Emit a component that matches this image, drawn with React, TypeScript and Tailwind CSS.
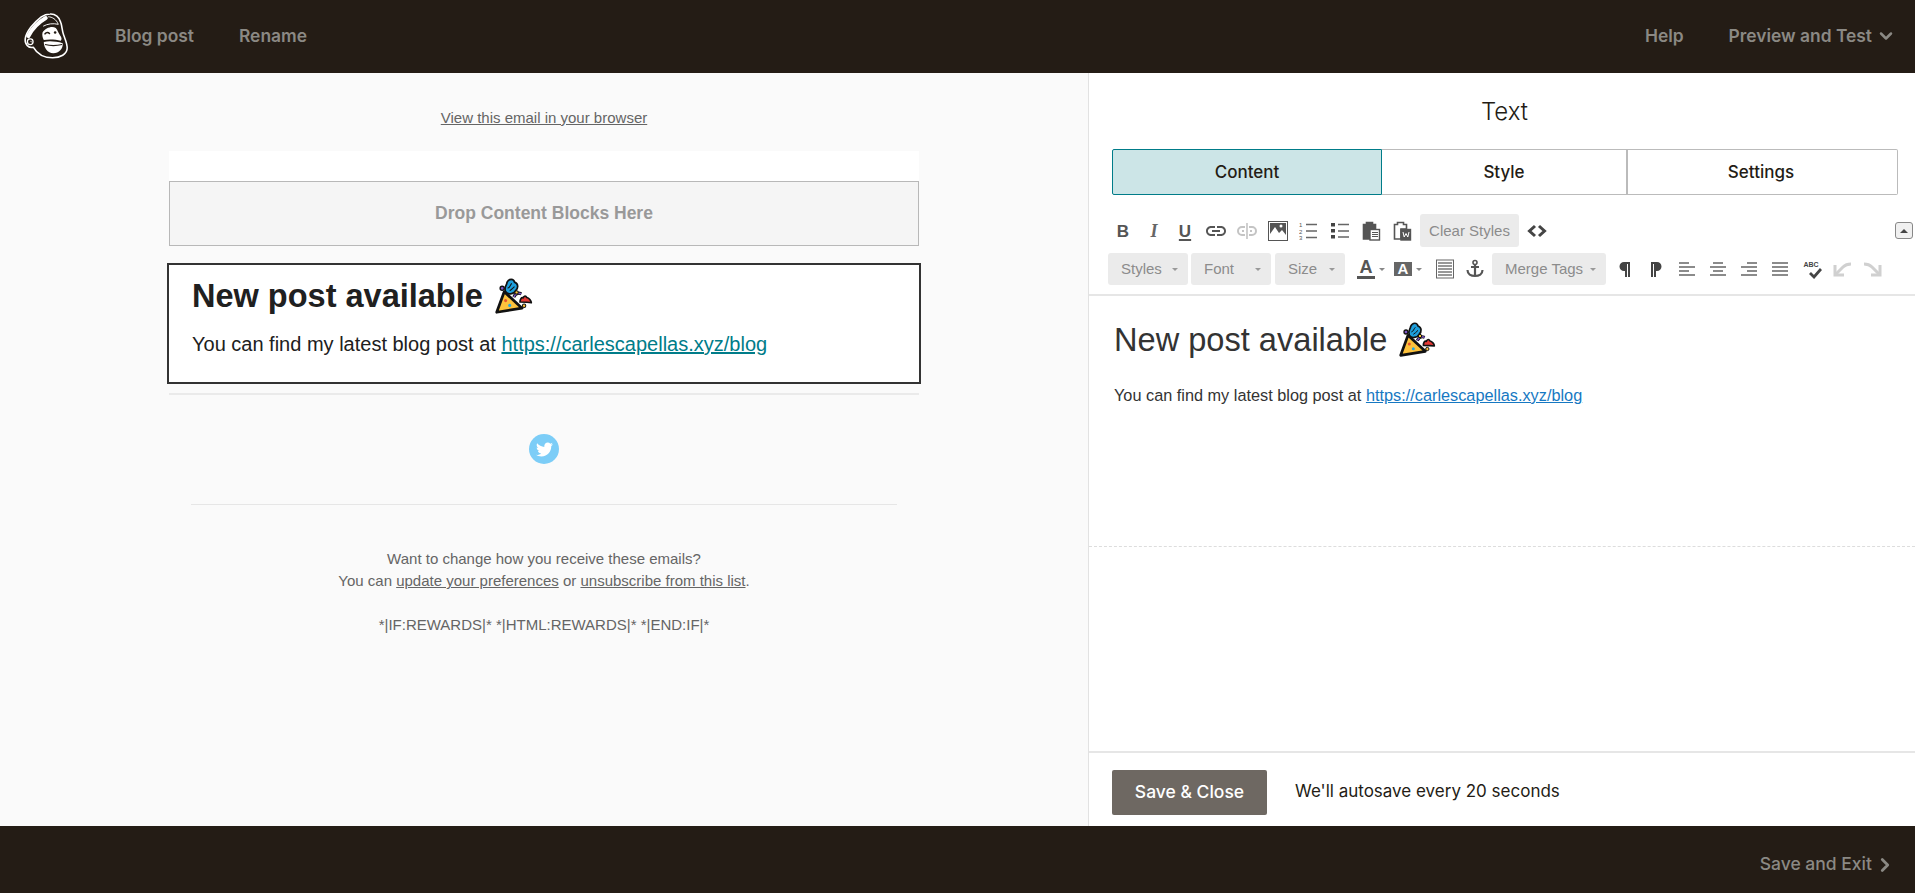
import React from "react";
import { ChevronDown, ChevronRight } from "lucide-react";
import { FaTwitter } from "react-icons/fa";
import { MdLink } from "react-icons/md";

function Popper({ w, h }: { w: number; h: number }) {
  return (
    <svg width={w} height={h} viewBox="15 20 115 108" className="inline-block shrink-0">
      <circle cx="38" cy="50" r="6" fill="#7d55c7" stroke="#111" strokeWidth="4" />
      <path d="M48 60 C42 45 52 42 52 33 C58 20 72 22 74 32 C86 36 85 50 78 56 C72 68 54 70 48 60Z" fill="#1e9fdc" stroke="#111" strokeWidth="5" />
      <path d="M54 50 C62 47 60 42 66 36 M60 57 C66 54 68 50 74 45" fill="none" stroke="#111" strokeWidth="3" />
      <path d="M72 76 C76 66 84 62 94 66" fill="none" stroke="#111" strokeWidth="9" />
      <path d="M72 76 C76 66 84 62 94 66" fill="none" stroke="#7d55c7" strokeWidth="4" />
      <path d="M90 90 C90 82 94 76 99 78 C102 71 107 71 110 77 C116 78 123 86 123 92 C113 90 100 90 90 90Z" fill="#e53935" stroke="#111" strokeWidth="5" strokeLinejoin="round" />
      <path d="M22 120 L44 60 L96 108 Z" fill="#fdc23c" stroke="#111" strokeWidth="8" strokeLinejoin="round" />
      <circle cx="48" cy="86" r="4.500" fill="#e5532d" />
      <circle cx="60" cy="100" r="4.500" fill="#2aa7e0" />
      <circle cx="80" cy="62" r="5" fill="#fdc23c" stroke="#111" strokeWidth="3" />
      <circle cx="102" cy="101" r="5" fill="#fdc23c" stroke="#111" strokeWidth="3" />
    </svg>
  );
}

function Logo() {
  return (
    <svg width="46" height="48" viewBox="26 20 146 150" className="shrink-0">
      <path d="M112 25 C128 24 142 36 146 52 C150 64 150 78 155 92 C160 106 168 122 166 136 C164 152 146 164 120 164 C92 164 70 150 59 131 C44 134 31 122 33 104 C36 82 60 52 84 34 C93 28 103 25 112 25Z" fill="#241c15" stroke="#fff" strokeWidth="5" strokeLinejoin="round" />
      <path d="M43 95 C54 74 74 52 98 38" fill="none" stroke="#fff" strokeWidth="13" strokeLinecap="round" />
      <path d="M106 34 C118 34 132 42 138 58 C122 54 104 56 90 64" fill="none" stroke="#fff" strokeWidth="3" />
      <circle cx="49" cy="113" r="9" fill="none" stroke="#fff" strokeWidth="4" />
      <path d="M49 113 C52 109 56 112 54 116" fill="none" stroke="#fff" strokeWidth="2" />
      <path d="M88 84 C97 70 118 62 130 70 C136 76 137 84 143 92 C149 100 150 106 146 110 C130 106 108 104 92 108 C88 100 86 92 88 84Z" fill="#fff" />
      <path d="M96 88 C100 83 106 83 110 87" fill="none" stroke="#241c15" strokeWidth="5" strokeLinecap="round" />
      <circle cx="128" cy="84" r="4" fill="#241c15" />
      <path d="M92 114 C108 110 132 112 152 118 C154 134 140 150 122 150 C104 150 92 132 92 114Z" fill="#fff" />
      <path d="M96 122 C112 126 132 126 150 122" fill="none" stroke="#241c15" strokeWidth="4" />
    </svg>
  );
}

const Ic = ({ children, w = 20 }: { children: React.ReactNode; w?: number }) => (
  <svg width={w} height="20" viewBox="0 0 20 20" className="shrink-0" fill="#555">{children}</svg>
);

function ImageIcon() {
  return (
    <Ic>
      <rect x="0.5" y="0.5" width="19" height="19" fill="#fff" stroke="#555" />
      <path d="M2 2h16v12l-4-5-3 3-4-6-5 7z" fill="#555" />
      <circle cx="13" cy="5" r="1.5" fill="#fff" />
    </Ic>
  );
}
function OrderedList() {
  return (
    <Ic>
      <text x="0" y="6" fontSize="6" fontFamily="Liberation Sans" fill="#555">1</text>
      <text x="0" y="12.500" fontSize="6" fontFamily="Liberation Sans" fill="#555">2</text>
      <text x="0" y="19" fontSize="6" fontFamily="Liberation Sans" fill="#555">3</text>
      <path d="M7 3.500h11M7 10h11M7 16.500h11" stroke="#666" strokeWidth="1.300" />
    </Ic>
  );
}
function BulletList() {
  return (
    <Ic>
      <rect x="1" y="2" width="4" height="3.500" fill="#444" />
      <rect x="1" y="8" width="4" height="3.500" fill="#444" />
      <rect x="1" y="14" width="4" height="3.500" fill="#444" />
      <path d="M8 3.500h11M8 10h11M8 16h11" stroke="#666" strokeWidth="1.300" />
    </Ic>
  );
}
function Clipboard({ word }: { word?: boolean }) {
  return (
    <Ic>
      <path d="M2.500 3.500h3V1.500h6v2h3V8H9v10H2.500z" fill={word ? "#fff" : "#555"} stroke="#555" strokeWidth="1.600" />
      <rect x="9" y="8.500" width="9.500" height="10.500" fill={word ? "#555" : "#fff"} stroke="#555" strokeWidth="1.400" />
      {word ? (
        <path d="M11 11l1.200 5 1.800-3.500 1.800 3.500 1.200-5" fill="none" stroke="#fff" strokeWidth="1" />
      ) : (
        <path d="M11 11.500h6M11 13.500h6M11 15.500h6" stroke="#555" strokeWidth="1" />
      )}
    </Ic>
  );
}
function Unlink() {
  return (
    <Ic>
      <path d="M8 6H5a4 4 0 0 0 0 8h3M12 6h3a4 4 0 0 1 0 8h-3M5 10h2M13 10h2" fill="none" stroke="#c4c4c4" strokeWidth="2" />
      <path d="M10 2v16" stroke="#c4c4c4" strokeWidth="1.600" />
    </Ic>
  );
}
function Align({ kind }: { kind: "l" | "c" | "r" | "j" }) {
  const d = {
    l: "M2 4h10M2 8h16M2 12h10M2 16h16",
    c: "M5 4h10M2 8h16M5 12h10M2 16h16",
    r: "M8 4h10M2 8h16M8 12h10M2 16h16",
    j: "M2 4h16M2 8h16M2 12h16M2 16h16",
  }[kind];
  return <Ic><path d={d} stroke="#666" strokeWidth="1.500" /></Ic>;
}
function Pilcrow({ flip }: { flip?: boolean }) {
  return (
    <Ic>
      <path
        d={flip ? "M5 3h6a4.500 4.500 0 0 1 0 9h-1v6H8V5H7v13H5z" : "M15 3H9a4.500 4.500 0 0 0 0 9h1v6h2V5h1v13h2z"}
        fill="#444"
      />
    </Ic>
  );
}
function CornerArrow({ flip }: { flip?: boolean }) {
  return (
    <svg width="20" height="20" viewBox="0 0 20 20" className={flip ? "shrink-0 -scale-x-100" : "shrink-0"}>
      <path d="M3 6v10h9" fill="none" stroke="#d0d0d0" strokeWidth="3" />
      <path d="M4 15 L11 8 C13 6 15 5 19 5" fill="none" stroke="#d0d0d0" strokeWidth="3" />
    </svg>
  );
}
function Spell() {
  return (
    <span className="relative flex h-[20px] w-[20px] items-start justify-center">
      <span className="text-[7px] font-bold leading-[12px] text-[#444]">ABC</span>
      <svg width="14" height="11" viewBox="0 0 14 11" className="absolute bottom-0 right-[-1px]"><path d="M2 5l4 4 7-8" fill="none" stroke="#444" strokeWidth="2.800" /></svg>
    </span>
  );
}
function Caret({ dark }: { dark?: boolean }) {
  return <span className={`h-0 w-0 border-x-[3.5px] border-t-[3.5px] border-x-transparent ${dark ? "border-t-[#888]" : "border-t-[#999]"}`} />;
}
function Drop({ label, cls }: { label: string; cls: string }) {
  return (
    <span className={`flex h-[32px] shrink-0 items-center justify-between rounded-[3px] bg-[#ebebeb] pl-[13px] pr-[10px] text-[15px] text-[#8c8c8c] ${cls}`}>
      {label}
      <Caret />
    </span>
  );
}

function Toolbar() {
  return (
    <div className="flex h-[101px] shrink-0 flex-col border-b-[2px] border-[#e6e6e6] pl-[20px] pr-[2px] pt-[19px] font-['Liberation_Sans',sans-serif]">
      <div className="flex h-[33px] items-center">
        <div className="mt-[1px] flex items-center gap-[11px] pl-[4px]">
          <span className="w-[20px] text-center text-[17px] font-bold leading-none text-[#555]">B</span>
          <span className="w-[20px] text-center font-['Liberation_Serif',serif] text-[18px] font-bold italic leading-none text-[#666]">I</span>
          <span className="w-[20px] text-center text-[17px] font-bold leading-none text-[#555] underline decoration-2 underline-offset-2">U</span>
          <span className="flex w-[20px] justify-center"><MdLink size={24} color="#555" className="-mx-[2px]" /></span>
          <Unlink />
          <ImageIcon />
          <OrderedList />
          <BulletList />
          <Clipboard />
          <Clipboard word />
        </div>
        <span className="ml-[8px] flex h-[33px] w-[99px] items-center justify-center rounded-[3px] bg-[#ebebeb] pt-[1px] text-[15px] text-[#8c8c8c]">Clear Styles</span>
        <svg width="20" height="14" viewBox="0 0 20 14" className="ml-[8px] mt-[1px] shrink-0">
          <path d="M8 2L2.500 7 8 12M12 2l5.500 5L12 12" fill="none" stroke="#444" strokeWidth="3" />
        </svg>
        <span className="ml-auto flex h-[17px] w-[18px] items-center justify-center rounded-[3px] border border-[#888] bg-[#f0f0f0]">
          <span className="h-0 w-0 border-x-[4px] border-b-[4px] border-x-transparent border-b-[#444]" />
        </span>
      </div>
      <div className="-ml-[1px] mt-[6px] flex h-[32px] items-center">
        <Drop label="Styles" cls="w-[80px]" />
        <Drop label="Font" cls="ml-[3px] w-[80px]" />
        <Drop label="Size" cls="ml-[4px] w-[70px]" />
        <span className="ml-[12px] flex items-center gap-[4px]">
          <span className="flex h-[20px] w-[18px] flex-col items-center border-b-[3px] border-[#555] text-[18px] font-bold leading-[17px] text-[#555]">A</span>
          <Caret dark />
        </span>
        <span className="ml-[9px] flex items-center gap-[4px]">
          <span className="flex h-[14px] w-[18px] items-end justify-center bg-[#666] text-[15px] font-bold leading-[14px] text-white">A</span>
          <Caret dark />
        </span>
        <span className="ml-[13px]">
          <Ic>
            <rect x="1.500" y="1" width="17" height="18" fill="#fff" stroke="#666" />
            <path d="M3 4h14M3 7h14M3 10h14M3 13h14M3 16h14" stroke="#777" strokeWidth="1.600" />
          </Ic>
        </span>
        <span className="ml-[10px]">
          <Ic>
            <circle cx="10" cy="3.500" r="2" fill="none" stroke="#555" strokeWidth="1.600" />
            <path d="M10 5.500V18M6 8h8M2.500 11c0 4 3.500 6 7.500 6s7.500-2 7.500-6" fill="none" stroke="#555" strokeWidth="2.200" />
          </Ic>
        </span>
        <Drop label="Merge Tags" cls="ml-[7px] w-[114px]" />
        <div className="ml-[9px] flex items-center gap-[11px]">
          <Pilcrow />
          <Pilcrow flip />
          <Align kind="l" />
          <Align kind="c" />
          <Align kind="r" />
          <Align kind="j" />
          <Spell />
          <CornerArrow />
          <CornerArrow flip />
        </div>
      </div>
    </div>
  );
}

export default function App() {
  return (
    <div className="flex h-[893px] w-[1915px] flex-col overflow-hidden bg-white font-['Liberation_Sans',sans-serif]">
      <header className="flex h-[73px] shrink-0 items-center bg-[#241c15] pb-[1px] pl-[23px] pr-[19px] font-['Inter',sans-serif] text-[17.400px] font-semibold text-[#8b8984]">
        <Logo />
        <span className="ml-[46px]">Blog post</span>
        <span className="ml-[45px]">Rename</span>
        <span className="ml-auto">Help</span>
        <span className="ml-[45px]">Preview and Test</span>
        <ChevronDown size={20} strokeWidth={3} className="ml-[4px]" />
      </header>

      <main className="flex min-h-0 flex-1">
        <section className="flex w-[1088px] shrink-0 flex-col items-center bg-[#fafafa]">
          <a className="mt-[37px] text-[15px] leading-[16px] text-[#656565] underline">View this email in your browser</a>
          <div className="mt-[25px] flex w-[750px] flex-col">
            <div className="h-[30px] bg-white" />
            <div className="flex h-[65px] items-center justify-center border border-[#b8b8b8] bg-[#f5f5f5] text-[17.500px] font-bold text-[#999]">Drop Content Blocks Here</div>
            <div className="-mx-[2px] mt-[17px] flex h-[121px] flex-col border-2 border-[#333] bg-white pl-[23px] text-[#202020]">
              <h1 className="mt-[11px] flex items-center gap-[11px] text-[32.500px] font-bold leading-[40px]">
                New post available <Popper w={40} h={37} />
              </h1>
              <p className="mt-[13px] text-[20px] leading-[30px]">
                You can find my latest blog post at <a className="text-[#007c89] underline">https://carlescapellas.xyz/blog</a>
              </p>
            </div>
            <div className="mt-[9px] h-[2px] bg-[#eaeaea]" />
            <div className="mt-[39px] flex h-[30px] w-[30px] items-center justify-center self-center rounded-full bg-[#7ccdf7]">
              <FaTwitter size={17} color="#fff" />
            </div>
            <div className="mx-[22px] mt-[40px] h-[1px] bg-[#e6e6e6]" />
            <div className="mt-[43px] text-center text-[15px] leading-[22px] text-[#656565]">
              <p>Want to change how you receive these emails?</p>
              <p>You can <a className="underline">update your preferences</a> or <a className="underline">unsubscribe from this list</a>.</p>
              <p className="mt-[22px]">*|IF:REWARDS|* *|HTML:REWARDS|* *|END:IF|*</p>
            </div>
          </div>
        </section>

        <aside className="flex min-w-0 flex-1 flex-col border-l border-[#e2e2e2] bg-white">
          <div className="flex h-[76px] shrink-0 items-start justify-center pl-[5px] pt-[23px] font-['Inter',sans-serif] text-[24px] font-light leading-[32px] text-[#241c15]">Text</div>
          <div className="ml-[23px] mr-[17px] flex h-[46px] shrink-0 font-['Inter',sans-serif] text-[17px] font-medium text-[#241c15]">
            <div className="flex w-[270px] items-center justify-center rounded-l-[2px] border border-[#007c89] bg-[#cce5e7] pt-[1px]">Content</div>
            <div className="flex w-[246px] items-center justify-center border-y border-r-2 border-[#bbbbbb] pt-[1px]">Style</div>
            <div className="flex flex-1 items-center justify-center rounded-r-[2px] border-y border-r border-[#bbbbbb] pr-[3px] pt-[1px]">Settings</div>
          </div>
          <Toolbar />
          <div className="h-[251px] shrink-0 border-b border-dashed border-[#dddddd] px-[25px] pt-[24px] text-[#333]">
            <h2 className="flex items-center gap-[11px] text-[32.600px] leading-[40px]">
              New post available <Popper w={39} h={36} />
            </h2>
            <p className="mt-[24px] text-[16.300px] leading-[22px]">
              You can find my latest blog post at <a className="text-[#1678c2] underline">https://carlescapellas.xyz/blog</a>
            </p>
          </div>
          <div className="flex-1" />
          <div className="flex h-[75px] shrink-0 items-start border-t-2 border-[#e6e6e6] pl-[23px] pt-[17px] font-['Inter',sans-serif]">
            <button className="h-[45px] w-[155px] rounded-[2px] bg-[#6e6862] text-[17.500px] font-medium text-white">Save &amp; Close</button>
            <span className="ml-[28px] mt-[10px] text-[17px] leading-[22px] text-[#241c15]">We'll autosave every 20 seconds</span>
          </div>
        </aside>
      </main>

      <footer className="flex h-[67px] shrink-0 items-center justify-end bg-[#241c15] pr-[19px] pt-[10px] font-['Inter',sans-serif] text-[17.500px] font-medium text-[#8b8984]">
        Save and Exit
        <ChevronRight size={22} strokeWidth={3} className="ml-[2px]" />
      </footer>
    </div>
  );
}
